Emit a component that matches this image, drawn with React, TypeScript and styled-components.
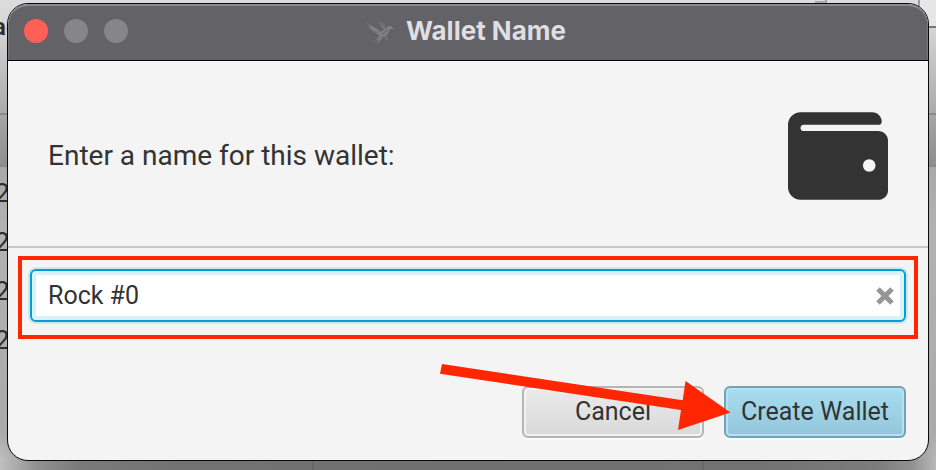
import React from "react";
import styled, { createGlobalStyle } from "styled-components";

const Global = createGlobalStyle`
  * { box-sizing: border-box; }
  body { margin: 0; background: #b4b4b4; font-family: Roboto, "Liberation Sans", sans-serif; color: #333; }
  #root { min-height: 100vh; display: grid; }
`;

const Desktop = styled.div`
  position: relative;
  display: grid;
  min-height: 100vh;
  padding: 3px 7px 9px;
  overflow: hidden;
  background: linear-gradient(#dcdcdc, #d4d4d4 30px, #aaa 113px, #8c8c8c 113px, #8c8c8c 115px, #a6a6a6 115px, #8e8e8e 165px, #8a8a8a 165px, #8a8a8a 167px, #a8a8a8 167px, #b2b2b2 230px, #a8a8a8);
`;

const RightEdge = styled.div`
  position: absolute;
  inset: 0 0 auto auto;
  width: 18px;
  height: 28px;
  border-left: 2px solid #9c9c9c;
  border-bottom: 2px solid #777;
  background: #e6e6e6;
`;

const Notch = styled.div`
  position: absolute;
  top: 0;
  right: 109px;
  width: 12px;
  height: 3px;
  border-right: 2px solid #a0a0a0;
  border-bottom: 2px solid #a8a8a8;
`;

const BottomShade = styled.div`
  position: absolute;
  inset: auto 0 0;
  height: 40px;
  background: linear-gradient(90deg, #c0c0c0, #929292 36px, #7a7a7a 80px, #727272 180px, #707070 50%, #727272 calc(100% - 180px), #7c7c7c calc(100% - 60px), #929292 calc(100% - 24px), #b8b8b8);
  mask-image: linear-gradient(transparent, #000 30px);
`;

const ColumnLine = styled.div<{ $left: string }>`
  position: absolute;
  left: ${(p) => p.$left};
  bottom: 0;
  width: 2px;
  height: 9px;
  background: #686868;
`;

const Fragment = styled.span<{ $top: number }>`
  position: absolute;
  left: -5px;
  top: ${(p) => p.$top}px;
  font-size: 26px;
  line-height: 32px;
  color: #2c2c2c;
`;

const Heading = styled(Fragment)`
  left: -7px;
  font-size: 24px;
  font-weight: 600;
`;

const Window = styled.main`
  position: relative;
  display: flex;
  flex-direction: column;
  border: 1px solid #0a0a0a;
  border-radius: 21px;
  overflow: hidden;
  background: #f4f4f4;
`;

const TitleBar = styled.header`
  display: grid;
  grid-template-columns: 1fr auto 1fr;
  align-items: center;
  height: 57px;
  padding: 0 20px 2px 16px;
  background: #636266;
  border-bottom: 1px solid #000;
  border-radius: 20px 20px 0 0;
  box-shadow: inset 0 2px 0 #8b8a8d, inset 1px 0 0 #77767a, inset -1px 0 0 #77767a;
`;

const Lights = styled.div`
  display: flex;
  gap: 16px;
`;

const Light = styled.button<{ $color: string }>`
  width: 24px;
  height: 24px;
  padding: 0;
  border: 0;
  border-radius: 50%;
  background: ${(p) => p.$color};
`;

const Title = styled.h1`
  display: flex;
  align-items: center;
  gap: 12px;
  margin: 0;
  font-family: Inter, sans-serif;
  font-size: 26px;
  line-height: 32px;
  font-weight: 700;
  color: #dfdee2;
`;

const Header = styled.section`
  display: flex;
  align-items: center;
  justify-content: space-between;
  height: 187px;
  padding: 4px 40px 0;
  border-bottom: 2px solid #c8c8c8;
`;

const Prompt = styled.label`
  font-size: 28px;
  line-height: 36px;
`;

const Highlight = styled.div`
  margin: 8px 10px 0;
  padding: 9px 8px 13px;
  border: 4px solid #ff2600;
`;

const Field = styled.div`
  display: flex;
  align-items: center;
  height: 53px;
  padding: 0 10px 0 16px;
  border: 2px solid #039ed3;
  border-radius: 6px;
  background: #fff;
  box-shadow: 0 0 0 2px #cfe8ef, inset 0 0 0 4px #d9f2f8;
`;

const NameInput = styled.input`
  flex: 1;
  min-width: 0;
  padding: 0;
  border: 0;
  outline: 0;
  background: transparent;
  color: #333;
  font: 25px/32px Roboto, sans-serif;
`;

const Clear = styled.button`
  display: flex;
  padding: 0;
  border: 0;
  background: transparent;
`;

const Actions = styled.footer`
  display: flex;
  justify-content: flex-end;
  gap: 20px;
  margin-top: auto;
  padding: 0 22px 22px;
`;

const Button = styled.button<{ $primary?: boolean }>`
  width: 182px;
  height: 52px;
  padding: 0;
  border: 2px solid ${(p) => (p.$primary ? "#74a3b8" : "#b5b5b5")};
  border-radius: 6px;
  background: ${(p) => (p.$primary ? "linear-gradient(#a8def1, #93c6da)" : "linear-gradient(#ebebeb, #d9d9d9)")};
  box-shadow: 0 2px 0 #fbfbfb, inset 0 0 0 2px ${(p) => (p.$primary ? "#b5e1f0" : "#f2f2f2")};
  color: #333;
  font: 25px/32px Roboto, sans-serif;
`;

const Arrow = styled.svg`
  position: absolute;
  right: 196px;
  bottom: 28px;
  pointer-events: none;
`;

const Bird = () => (
  <svg width="28" height="28" viewBox="0 0 28 28" aria-hidden="true">
    <g fill="#7f8589">
      <path d="M0 5 13 12 15 15 6 11Z" />
      <path d="M2 9 13 14 14 16 6 13Z" />
      <path d="M5 13 13 16 13 18Z" />
      <path d="M11 1 19 8 20 12 15 8Z" opacity=".8" />
      <path d="M14 7 20 12 18 14Z" opacity=".6" />
      <path d="M12 16 20 12 22 9 25 9 28 12 24 12 22 17 17 20 13 19Z" opacity=".9" />
      <path d="M14 18 7 26 12 22 11 27 17 20Z" opacity=".8" />
      <path d="M18 19 20 23 22 23 20 18Z" opacity=".6" />
    </g>
    <path d="M2 6 15 14M12 3 19 10M16 17 22 13" stroke="#505357" strokeWidth=".7" fill="none" />
  </svg>
);

export default function App() {
  return (
    <Desktop>
      <Global />
      <RightEdge />
      <Notch />
      <BottomShade />
      <ColumnLine $left="33.3%" />
      <ColumnLine $left="75%" />
      <Heading $top={11}>ac</Heading>
      {[177, 226, 275, 324].map((top) => (
        <Fragment key={top} $top={top}>2</Fragment>
      ))}
      <Window>
        <TitleBar>
          <Lights>
            <Light $color="#ff5f57" aria-label="Close" />
            <Light $color="#868589" aria-label="Minimize" />
            <Light $color="#868589" aria-label="Zoom" />
          </Lights>
          <Title>
            <Bird />
            Wallet Name
          </Title>
        </TitleBar>
        <Header>
          <Prompt htmlFor="wallet-name">Enter a name for this wallet:</Prompt>
          <svg width="100" height="88" viewBox="0 32 512 448" fill="#333" aria-hidden="true">
            <path d="M461.2 128H80c-8.84 0-16-7.16-16-16s7.16-16 16-16h384c8.84 0 16-7.16 16-16 0-26.51-21.49-48-48-48H64C28.65 32 0 60.65 0 96v320c0 35.35 28.65 64 64 64h397.2c28.02 0 50.8-21.53 50.8-48V176c0-26.47-22.78-48-50.8-48zM416 336c-17.67 0-32-14.33-32-32s14.33-32 32-32 32 14.33 32 32-14.33 32-32 32z" />
          </svg>
        </Header>
        <Highlight>
          <Field>
            <NameInput id="wallet-name" defaultValue="Rock #0" />
            <Clear aria-label="Clear">
              <svg width="18" height="18" viewBox="0 0 18 18" stroke="#969696" strokeWidth="5">
                <path d="M2 2 16 16M16 2 2 16" />
              </svg>
            </Clear>
          </Field>
        </Highlight>
        <Actions>
          <Button>Cancel</Button>
          <Button $primary>Create Wallet</Button>
        </Actions>
        <Arrow width="292" height="70" viewBox="440 362 292 70" aria-hidden="true">
          <path d="M442 364 682.7 400.3 685.5 381 730.5 412.5 678 430 681 410 440 373.7Z" fill="#ff2600" />
        </Arrow>
      </Window>
    </Desktop>
  );
}
